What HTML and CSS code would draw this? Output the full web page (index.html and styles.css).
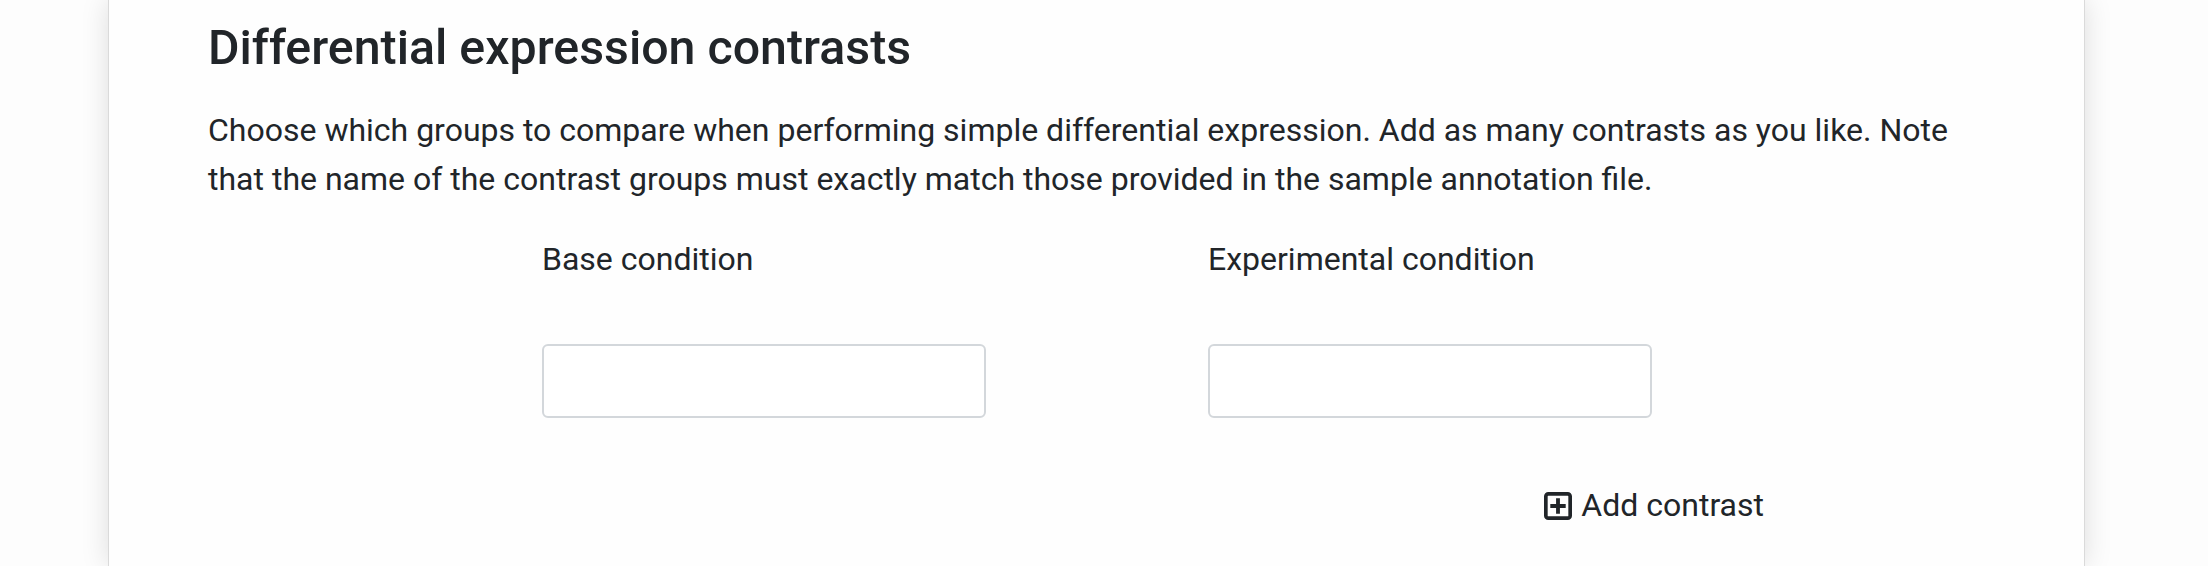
FILE: index.html
```html
<!DOCTYPE html>
<html lang="en">
<head>
<meta charset="utf-8">
<title>Differential expression contrasts</title>
<link rel="stylesheet" href="styles.css">
</head>
<body>
<main class="card">
  <h3 class="title">Differential expression contrasts</h3>
  <p class="intro">Choose which groups to compare when performing simple differential expression. Add as many contrasts as you like. Note that the name of the contrast groups must exactly match those provided in the sample annotation file.</p>
  <div class="contrast-row">
    <div class="field">
      <label class="field-label" for="base">Base condition</label>
      <input class="field-input" id="base" type="text">
    </div>
    <div class="field">
      <label class="field-label" for="exp">Experimental condition</label>
      <input class="field-input" id="exp" type="text">
    </div>
  </div>
  <div class="actions">
    <button class="add-btn" type="button">
      <svg class="add-icon" viewBox="0 0 16 16" aria-hidden="true">
        <rect x="1.05" y="1.05" width="13.9" height="13.9" rx="1.4" fill="none" stroke="currentColor" stroke-width="2.1"/>
        <path d="M8 3.6v8.8M3.6 8h8.8" stroke="currentColor" stroke-width="2.2" fill="none"/>
      </svg>
      <span>Add contrast</span>
    </button>
  </div>
</main>
</body>
</html>
```
FILE: styles.css
```css
html, body {
  margin: 0;
  padding: 0;
  background: #fdfdfd;
}

body {
  font-family: Roboto, "Noto Sans", "Liberation Sans", sans-serif;
  color: #212529;
  padding-left: 108px;
  height: 566px;
  overflow: hidden;
}

.card {
  box-sizing: border-box;
  width: 1977px;
  min-height: 566px;
  background: #fefefe;
  border-left: 1px solid #dadada;
  border-right: 1px solid #dadada;
  box-shadow: 0 0 26px rgba(0, 0, 0, 0.13);
  padding: 19px 99px 0 99px;
}

.title {
  margin: 0;
  font-size: 48.3px;
  font-weight: 500;
  line-height: 58px;
}

.intro {
  margin: 29px 0 0 0;
  font-size: 32px;
  line-height: 49px;
}

.contrast-row {
  display: flex;
  gap: 222px;
  margin: 31px 0 0 334px;
}

.field {
  display: flex;
  flex-direction: column;
  width: 444px;
}

.field-label {
  font-size: 32px;
  line-height: 49px;
  margin-bottom: 60px;
}

.field-input {
  box-sizing: border-box;
  width: 444px;
  height: 74px;
  border: 2px solid #d3d7db;
  border-radius: 6px;
  background: #fff;
  margin: 0;
}

.actions {
  display: flex;
  justify-content: flex-end;
  padding-right: 221px;
  margin-top: 63px;
}

.add-btn {
  display: flex;
  align-items: center;
  gap: 9px;
  background: none;
  border: 0;
  padding: 0;
  font-family: inherit;
  font-size: 32px;
  line-height: 49px;
  color: #212529;
  cursor: pointer;
}

.add-icon {
  width: 28px;
  height: 28px;
  display: block;
}
```
